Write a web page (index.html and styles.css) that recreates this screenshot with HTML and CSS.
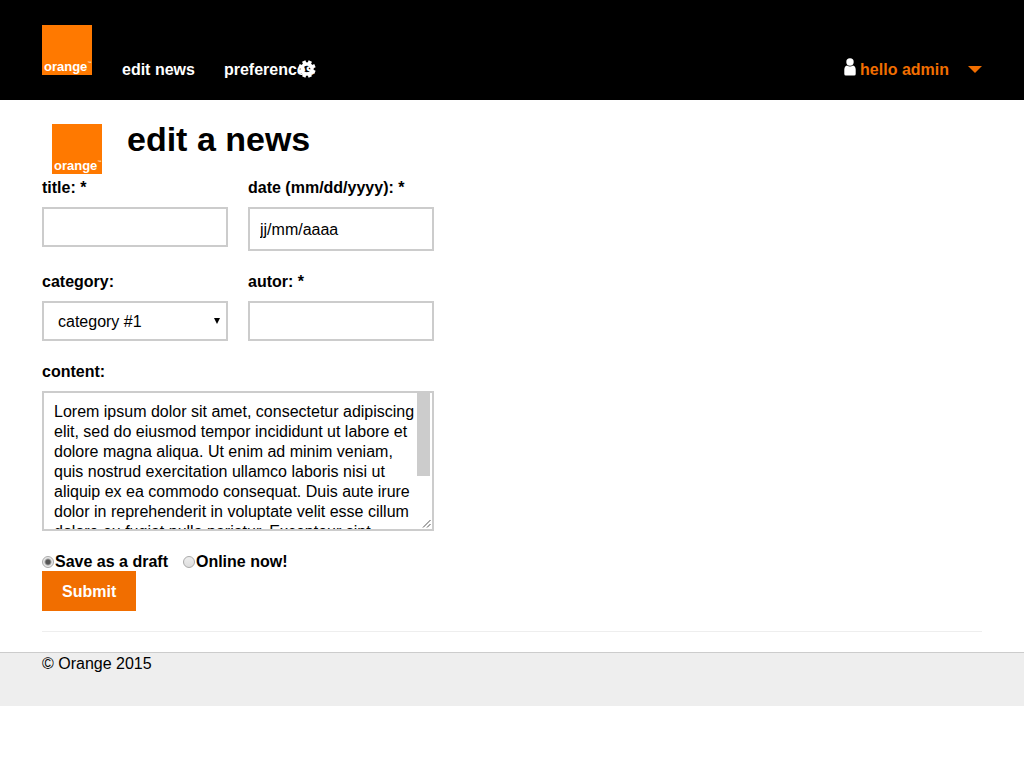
FILE: index.html
```html
<!DOCTYPE html>
<html lang="en">
<head>
<meta charset="utf-8">
<meta name="viewport" content="width=device-width, initial-scale=1">
<title>Edit a news</title>
<link rel="stylesheet" href="styles.css">
</head>
<body>
<header class="header">
  <a class="logo" href="#" aria-label="orange"><span class="logo-name">orange</span><span class="logo-mark">™</span></a>
  <nav class="nav">
    <a class="nav-link" href="#">edit news</a>
    <a class="nav-link" href="#">preferences
      <svg class="gear" viewBox="0 0 18 18" aria-hidden="true"><g fill="none" stroke="#fff"><circle cx="9" cy="9" r="5" stroke-width="3.400"/><g stroke-width="3.600" transform="rotate(22.500 9 9)"><path d="M9 .4v3M9 14.600v3M.4 9h3M14.600 9h3"/><path transform="rotate(45 9 9)" d="M9 .4v3M9 14.600v3M.4 9h3M14.600 9h3"/></g></g></svg>
    </a>
  </nav>
  <button class="account" type="button">
    <svg class="user" viewBox="0 0 12 18" aria-hidden="true"><circle cx="6" cy="4" r="3.700" fill="#fff"/><path fill="#fff" d="M3 7.500q3 2 6 0 2.500.5 2.700 4V16q0 1.500-1.500 1.500H1.800Q.3 17.500.3 16v-4.500q.2-3.500 2.700-4z"/></svg>
    <span class="account-name">hello admin</span>
    <svg class="caret" viewBox="0 0 14 7" aria-hidden="true"><path fill="#f16e00" d="M0 0h14L7 7z"/></svg>
  </button>
</header>
<main class="main">
  <div class="heading">
    <span class="logo"><span class="logo-name">orange</span><span class="logo-mark">™</span></span>
    <h1 class="title">edit a news</h1>
  </div>
  <form class="form">
    <div class="field">
      <label class="label" for="title">title: *</label>
      <input class="control" id="title" type="text">
    </div>
    <div class="field">
      <label class="label" for="date">date (mm/dd/yyyy): *</label>
      <input class="control control-date" id="date" type="text" placeholder="jj/mm/aaaa">
    </div>
    <div class="field">
      <label class="label" for="category">category:</label>
      <div class="control-wrap">
        <select class="control control-select" id="category"><option>category #1</option></select>
        <svg class="select-arrow" viewBox="0 0 6 6" aria-hidden="true"><path d="M0 0h6L3 6z"/></svg>
      </div>
    </div>
    <div class="field">
      <label class="label" for="autor">autor: *</label>
      <input class="control" id="autor" type="text">
    </div>
    <div class="field field-wide">
      <label class="label" for="content">content:</label>
      <div class="control-wrap">
        <textarea class="control control-area" id="content">Lorem ipsum dolor sit amet, consectetur adipiscing elit, sed do eiusmod tempor incididunt ut labore et dolore magna aliqua. Ut enim ad minim veniam, quis nostrud exercitation ullamco laboris nisi ut aliquip ex ea commodo consequat. Duis aute irure dolor in reprehenderit in voluptate velit esse cillum dolore eu fugiat nulla pariatur. Excepteur sint occaecat cupidatat non proident, sunt in culpa qui officia deserunt mollit anim id est laborum.</textarea>
        <svg class="grip" viewBox="0 0 9 9" aria-hidden="true"><path d="M1 8.500L8.500 1M5 8.500L8.500 5" fill="none" stroke="#555"/></svg>
      </div>
    </div>
    <div class="field-wide actions">
      <div class="choices">
        <label class="choice"><input class="radio" type="radio" name="state" checked>Save as a draft</label>
        <label class="choice"><input class="radio" type="radio" name="state">Online now!</label>
      </div>
      <button class="submit" type="submit">Submit</button>
    </div>
  </form>
  <hr class="rule">
</main>
<footer class="footer">© Orange 2015</footer>
</body>
</html>
```
FILE: styles.css
```css
* { box-sizing: border-box; }
body {
  margin: 0;
  background: #fff;
  color: #000;
  font: 16px/20px "Liberation Sans", Arial, sans-serif;
}
.header {
  display: flex;
  align-items: flex-end;
  min-height: 100px;
  padding: 25px 42px;
  background: #000;
}
.logo {
  display: flex;
  flex: none;
  align-items: flex-end;
  width: 50px;
  height: 50px;
  padding: 0 0 1px 2px;
  background: #ff7900;
  color: #fff;
  font-size: 13px;
  font-weight: bold;
  line-height: 15px;
  text-decoration: none;
}
.logo-mark {
  padding-bottom: 8px;
  font-size: 4px;
  font-weight: normal;
  line-height: 6px;
}
.nav {
  display: flex;
  gap: 29px;
  margin-left: 30px;
  line-height: 10px;
}
.nav-link {
  position: relative;
  color: #fff;
  font-weight: bold;
  text-decoration: none;
}
.gear {
  position: absolute;
  top: -5px;
  right: -1px;
  width: 18px;
  height: 18px;
}
.account {
  display: flex;
  align-items: flex-end;
  margin-left: auto;
  padding: 0;
  border: 0;
  background: none;
  color: #f16e00;
  font: bold 16px/10px "Liberation Sans", Arial, sans-serif;
}
.user {
  width: 12px;
  height: 18px;
  margin: 0 4px -1px 0;
}
.caret {
  width: 14px;
  height: 7px;
  margin: 0 0 2px 19px;
}
.main { padding: 20px 42px; }
.heading {
  display: flex;
  gap: 25px;
  padding: 4px 10px;
}
.title {
  margin: 0;
  font-size: 34px;
  line-height: 30px;
}
.form {
  display: grid;
  grid-template-columns: 1fr 1fr;
  gap: 21px 20px;
  align-items: start;
  max-width: 392px;
}
.field {
  display: flex;
  flex-direction: column;
  gap: 9px;
}
.field-wide { grid-column: 1 / -1; }
.label { font-weight: bold; }
.control-wrap {
  display: flex;
  position: relative;
}
.control {
  width: 100%;
  height: 40px;
  padding: 9px 10px 7px;
  border: 2px solid #ccc;
  border-radius: 0;
  background: #fff;
  color: #000;
  font: 16px/20px "Liberation Sans", Arial, sans-serif;
}
.control-date { height: 44px; }
.control::placeholder {
  color: #000;
  opacity: 1;
}
.control-select {
  padding: 9px 14px 7px;
  appearance: none;
}
.select-arrow {
  position: absolute;
  top: 17px;
  right: 8px;
  width: 6px;
  height: 6px;
  pointer-events: none;
}
.control-area {
  height: 140px;
  padding-right: 8px;
  background: linear-gradient(#ccc, #ccc) right 2px top / 13px 83px no-repeat #fff;
  resize: none;
  scrollbar-width: none;
}
.grip {
  position: absolute;
  right: 3px;
  bottom: 3px;
  width: 9px;
  height: 9px;
  pointer-events: none;
}
.actions {
  display: flex;
  flex-direction: column;
  align-items: flex-start;
}
.choices {
  display: flex;
  gap: 15px;
  height: 19px;
}
.choice {
  display: flex;
  align-items: center;
  height: 20px;
  font-weight: bold;
}
.radio {
  width: 12px;
  height: 12px;
  margin: 0 1px 0 0;
  border: 1px solid #aaa;
  border-radius: 50%;
  background: linear-gradient(#eee, #ddd);
  appearance: none;
}
.radio:checked {
  background: radial-gradient(circle, #555 0 2px, #e8e8e8 4px);
}
.submit {
  height: 40px;
  padding: 2px 20px 0;
  border: 0;
  background: #f16e00;
  color: #fff;
  font: bold 16px/20px "Liberation Sans", Arial, sans-serif;
}
.rule {
  margin: 20px 0 0;
  border: 0;
  border-top: 1px solid #eee;
}
.footer {
  min-height: 54px;
  padding: 1px 42px;
  border-top: 1px solid #ccc;
  background: #eee;
}
```
